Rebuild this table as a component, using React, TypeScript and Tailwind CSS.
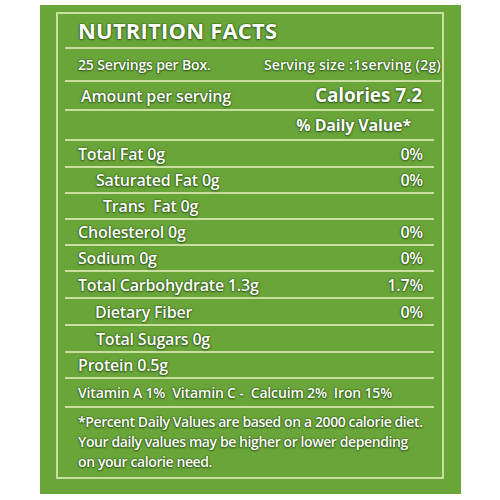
import React from "react";

const sh = "[text-shadow:0_0_1px_#2a5510,0_0_2px_#2a5510,0_1px_2px_#33631a]";

function Row({
  h,
  left,
  right,
  indent = "pl-[20px]",
  size = "text-[16px] tracking-[-0.2px]",
  last = false,
}: {
  h: string;
  left: React.ReactNode;
  right?: React.ReactNode;
  indent?: string;
  size?: string;
  last?: boolean;
}) {
  return (
    <div className={`${h} mx-[7px] mr-[8px] flex items-center justify-between ${last ? "" : "border-b-2 border-[#c8df9f]"}`}>
      <span className={`${indent} ${size} font-semibold whitespace-nowrap`}>{left}</span>
      {right !== undefined && (
        <span className="pr-[11px] text-[16px] font-semibold tracking-[-0.2px] whitespace-nowrap">{right}</span>
      )}
    </div>
  );
}

export default function App() {
  return (
    <div className="w-[500px] h-[500px] bg-white pt-[5px] pl-[40px]">
      <div
        className={`w-[421px] h-[489px] bg-[#6aa53a] pt-[7px] pl-[16px] pr-[17px] text-white ${sh}`}
        style={{ fontFamily: '"Open Sans", "Noto Sans", sans-serif' }}
      >
        <div className="h-[467px] border-2 border-[#c8df9f] flex flex-col">
          <div className="h-[35px] mx-[7px] mr-[8px] border-b-2 border-[#c8df9f] flex items-end pb-[6px]">
            <span className="pl-[13px] text-[22px] leading-none font-bold tracking-[0.2px]">NUTRITION FACTS</span>
          </div>
          <div className="h-[33px] mx-[7px] mr-[1px] border-b-2 border-[#c8df9f] flex items-center justify-between pr-0">
            <span className="pl-[13px] text-[14px] font-semibold tracking-[-0.15px] whitespace-nowrap">25 Servings per Box.</span>
            <span className="text-[14px] font-semibold tracking-[0.2px] whitespace-nowrap">Serving size :1serving (2g)</span>
          </div>
          <div className="h-[29px] mx-[7px] mr-[8px] border-b-2 border-[#c8df9f] flex items-center justify-between">
            <span className="pl-[16px] text-[16px] font-semibold tracking-[-0.15px] whitespace-nowrap">Amount per serving</span>
            <span className="pr-[12px] text-[19px] font-bold tracking-[-0.1px] whitespace-nowrap">Calories 7.2</span>
          </div>
          <div className="h-[30px] mx-[7px] mr-[8px] border-b-2 border-[#c8df9f] flex items-center justify-end">
            <span className="pr-[23px] text-[16px] font-bold tracking-[-0.15px] whitespace-nowrap">% Daily Value*</span>
          </div>
          <Row h="h-[27px]" indent="pl-[13px]" left="Total Fat 0g" right="0%" />
          <Row h="h-[26px]" indent="pl-[31px]" left="Saturated Fat 0g" right="0%" />
          <Row h="h-[26px]" indent="pl-[38px]" left={<>Trans&nbsp; Fat 0g</>} />
          <Row h="h-[26px]" indent="pl-[13px]" left="Cholesterol 0g" right="0%" />
          <Row h="h-[26px]" indent="pl-[13px]" left="Sodium 0g" right="0%" />
          <Row h="h-[27px]" indent="pl-[13px]" left="Total Carbohydrate 1.3g" right="1.7%" />
          <Row h="h-[27px]" indent="pl-[30px]" left="Dietary Fiber" right="0%" />
          <Row h="h-[27px]" indent="pl-[31px]" left="Total Sugars 0g" />
          <Row h="h-[26px]" indent="pl-[13px]" left="Protein 0.5g" />
          <Row
            h="h-[29px]"
            indent="pl-[13px]"
            size="text-[14px] tracking-[-0.15px]"
            left={<>Vitamin A 1%&nbsp; Vitamin C -&nbsp; Calcuim 2%&nbsp; Iron 15%</>}
          />
          <div className="flex-1 mx-[7px] pl-[13px] pt-[4px] text-[14px] font-semibold leading-[20px] tracking-[-0.4px]">
            <div className="whitespace-nowrap">*Percent Daily Values are based on a 2000 calorie diet.</div>
            <div className="whitespace-nowrap">Your daily values may be higher or lower depending</div>
            <div className="whitespace-nowrap">on your calorie need.</div>
          </div>
        </div>
      </div>
    </div>
  );
}
